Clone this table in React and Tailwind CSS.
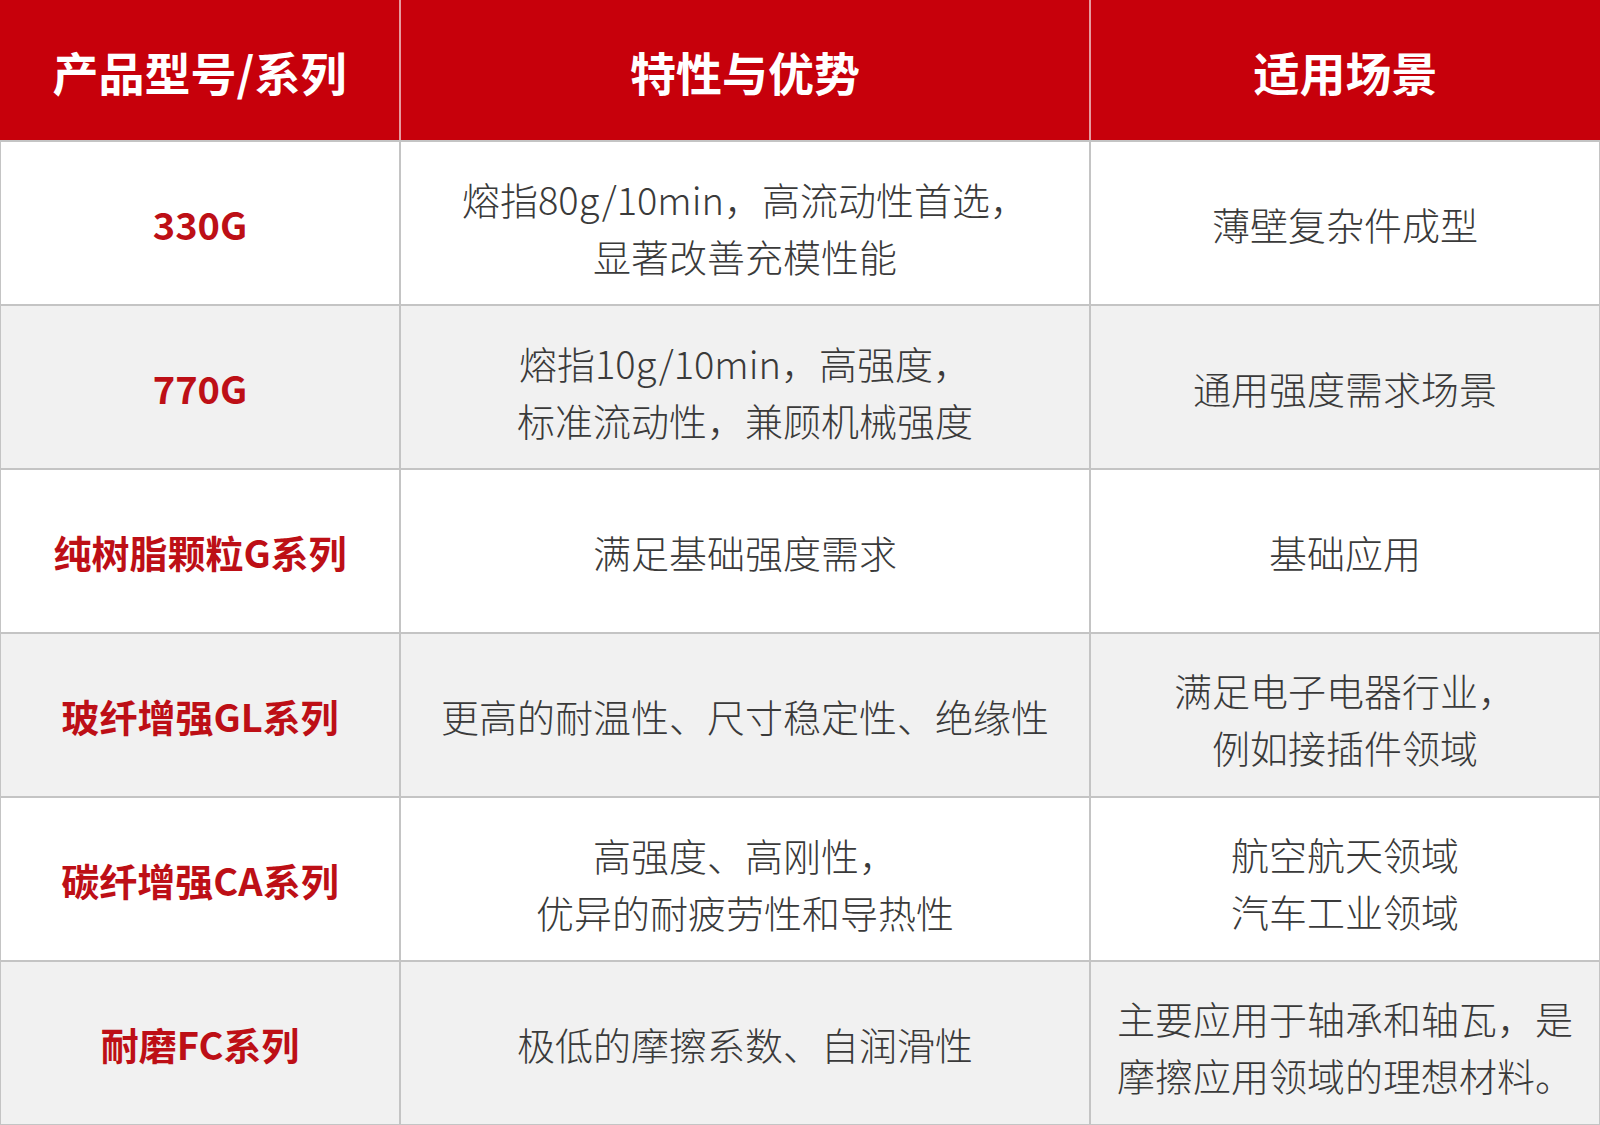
const rows = [
  { name: "330G", feat: ["熔指80g/10min，高流动性首选，", "显著改善充模性能"], use: ["薄壁复杂件成型"] },
  { name: "770G", feat: ["熔指10g/10min，高强度，", "标准流动性，兼顾机械强度"], use: ["通用强度需求场景"] },
  { name: "纯树脂颗粒G系列", feat: ["满足基础强度需求"], use: ["基础应用"] },
  { name: "玻纤增强GL系列", feat: ["更高的耐温性、尺寸稳定性、绝缘性"], use: ["满足电子电器行业，", "例如接插件领域"] },
  { name: "碳纤增强CA系列", feat: ["高强度、高刚性，", "优异的耐疲劳性和导热性"], use: ["航空航天领域", "汽车工业领域"] },
  { name: "耐磨FC系列", feat: ["极低的摩擦系数、自润滑性"], use: ["主要应用于轴承和轴瓦，是", "摩擦应用领域的理想材料。"] },
];

function Lines({ lines }) {
  return (
    <div className="text-center whitespace-nowrap">
      {lines.map((l, i) => (
        <div key={i}>{l}</div>
      ))}
    </div>
  );
}

export default function App() {
  return (
    <div
      className="w-[1600px] h-[1125px] bg-[#c4c4c4] flex flex-col"
      style={{ fontFamily: '"Noto Sans CJK SC", "Noto Sans", sans-serif' }}
    >
      <div className="grid grid-cols-[399px_2px_688px_2px_509px] h-[140px] bg-[#c7000b] text-white font-bold text-[46px] leading-none">
        <div className="flex items-center justify-center pt-[1px]">产品型号/系列</div>
        <div className="bg-[#e79a9e]" />
        <div className="flex items-center justify-center pt-[1px]">特性与优势</div>
        <div className="bg-[#e79a9e]" />
        <div className="flex items-center justify-center pt-[1px]">适用场景</div>
      </div>
      <div className="grid grid-cols-[398px_688px_508px] auto-rows-[162px] gap-[2px] mt-[2px] px-[1px] text-[38px] leading-[57px] text-[#3a3a3a] font-light">
        {rows.map((r, i) => {
          const bg = i % 2 === 0 ? "bg-white" : "bg-[#f1f1f1]";
          return [
            <div key={`a${i}`} className={`${bg} flex items-center justify-center`}>
              <span className="font-bold text-[#bd0f16]">{r.name}</span>
            </div>,
            <div
              key={`b${i}`}
              className={`${bg} flex items-center justify-center ${r.feat.length > 1 ? "pt-[8px]" : "pt-0"}`}
            >
              <Lines lines={r.feat} />
            </div>,
            <div
              key={`c${i}`}
              className={`${bg} flex items-center justify-center ${r.use.length > 1 ? "pt-[6px]" : "pt-0"}`}
            >
              <Lines lines={r.use} />
            </div>,
          ];
        })}
      </div>
    </div>
  );
}
